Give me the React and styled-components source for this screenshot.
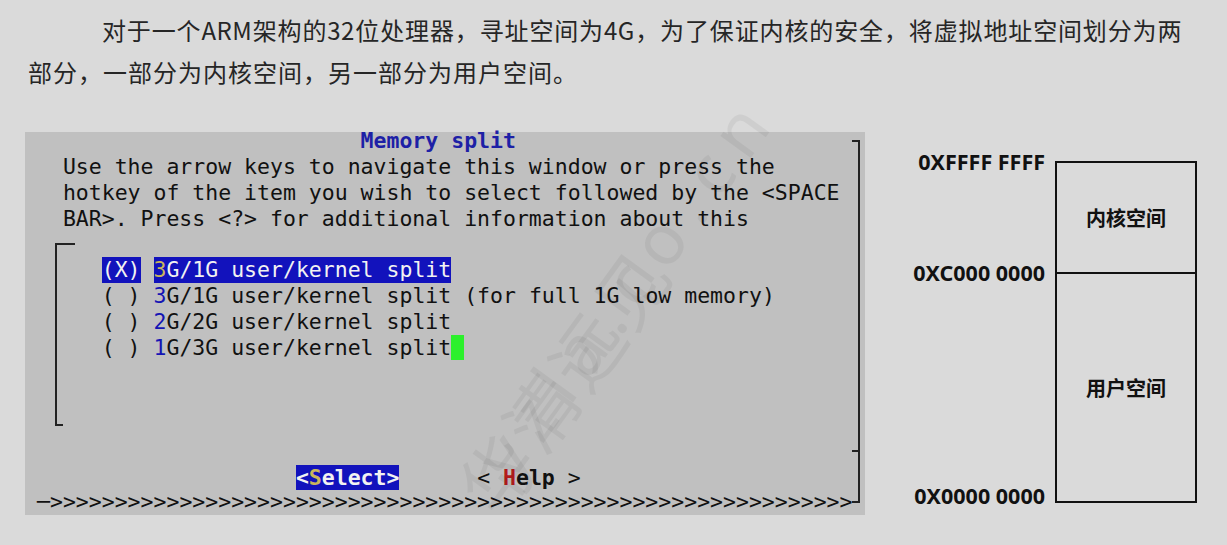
import React from 'react';
import styled, { createGlobalStyle } from 'styled-components';

const GlobalStyle = createGlobalStyle`
  html, body {
    margin: 0;
    padding: 0;
    background: #dadada;
  }
`;

const Page = styled.div`
  position: relative;
  height: 545px;
  padding-top: 9px;
  box-sizing: border-box;
  overflow: hidden;
`;

const Paragraph = styled.div`
  margin: 0 0 39px 28px;
  width: 1154px;
  font-family: "Noto Sans CJK SC", "Noto Sans", sans-serif;
  font-size: 24px;
  line-height: 42px;
  color: #262626;
`;

const ParaLine = styled.div`
  text-indent: ${p => (p.$first ? '74px' : '0')};
  text-align: ${p => (p.$justify ? 'justify' : 'left')};
  text-align-last: ${p => (p.$justify ? 'justify' : 'auto')};
  letter-spacing: ${p => (p.$justify ? '0.5px' : '1px')};
`;

const Content = styled.div`
  display: flex;
  align-items: flex-start;
`;

// terminal dialog (menuconfig)
const Terminal = styled.div`
  display: flex;
  width: 840px;
  height: 383px;
  box-sizing: border-box;
  margin-left: 25px;
  padding-left: 12px;
  background: #c0c0c0;
  font-family: "DejaVu Sans Mono", monospace;
  font-size: 21.5px;
  line-height: 25.8px;
  color: #111;
  white-space: pre;
`;

const Body = styled.div`
  width: 63ch;
  display: flex;
  flex-direction: column;
`;

const Title = styled.div`
  height: 18px;
  line-height: 18px;
  margin-bottom: 4px;
  padding-left: 25ch;
  color: #1d20a6;
  font-weight: bold;
`;

const Line = styled.div`
  height: 25.8px;
  padding-left: ${p => p.$indent || 0}ch;
`;

const ListBox = styled.div`
  position: relative;
  height: 180.6px;
  box-sizing: border-box;
  margin: 12.9px 0 12.9px calc(1.5ch - 1px);
  padding: 12.9px 0 0 calc(3.5ch - 1px);
  border-left: 2px solid #222;

  &::before {
    content: '';
    position: absolute;
    left: -2px;
    top: -1px;
    width: 20px;
    border-top: 2px solid #222;
  }
  &::after {
    content: '';
    position: absolute;
    left: -2px;
    bottom: -1px;
    width: 8px;
    border-top: 2px solid #222;
  }
`;

const Item = styled.div`
  height: 25.8px;
  display: flex;
`;

const Mark = styled.span`
  background: ${p => (p.$active ? '#1212bc' : 'transparent')};
  color: ${p => (p.$active ? '#f2f2f2' : '#111')};
`;

const Hot = styled.span`
  color: ${p => p.$color};
`;

const Cursor = styled.span`
  display: inline-block;
  width: 1ch;
  height: 25.8px;
  background: #2cf02c;
`;

const ButtonRow = styled.div`
  height: 25.8px;
  padding-left: 20ch;
  padding-top: 2px;
  box-sizing: border-box;
`;

const Button = styled.span`
  background: ${p => (p.$active ? '#1212bc' : 'transparent')};
  color: ${p => (p.$active ? '#f2f2f2' : '#111')};
`;

const ButtonLabel = styled.span`
  font-weight: bold;
`;

const Edge = styled.div`
  width: 1ch;
  display: flex;
  flex-direction: column;
  padding: 8px 0 12px;
  box-sizing: border-box;
`;

const EdgeLine = styled.div`
  flex: 1;
  width: calc(0.5ch + 1px);
  box-sizing: border-box;
  border: 2px solid #222;
  border-left: none;
  display: flex;
  flex-direction: column;
  justify-content: flex-end;
`;

const Tick = styled.div`
  width: 100%;
  margin-bottom: 49px;
  border-top: 2px solid #222;
`;

// memory map diagram
const Diagram = styled.div`
  display: flex;
  align-items: flex-start;
  gap: 10px;
  margin-left: 45px;
  font-family: "Noto Sans", "Noto Sans CJK SC", sans-serif;
  font-weight: 700;
  color: #111;
`;

const LabelCol = styled.div`
  width: 135px;
  margin-top: 18px;
  display: flex;
  flex-direction: column;
  align-items: flex-end;
`;

const Addr = styled.div`
  margin-top: ${p => p.$offset || 0}px;
  font-size: 21.5px;
  line-height: 24px;
  white-space: nowrap;
`;

const MemBox = styled.div`
  width: 142px;
  margin-top: 29px;
  border: 2px solid #111;
  box-sizing: border-box;
`;

const Region = styled.div`
  height: ${p => p.$height}px;
  display: flex;
  align-items: center;
  justify-content: center;
  border-bottom: ${p => (p.$divider ? '2px solid #111' : 'none')};
  font-family: "Noto Sans CJK SC", sans-serif;
  font-size: 20px;
`;

// faint watermark over the page
const Watermark = styled.div`
  position: absolute;
  inset: 0;
  pointer-events: none;
`;

const WaterText = styled.span`
  position: absolute;
  left: ${p => p.$x - p.$w / 2}px;
  top: ${p => p.$y - 40}px;
  width: ${p => p.$w}px;
  height: 80px;
  line-height: 80px;
  text-align: center;
  transform: rotate(-54deg);
  font-family: "Noto Sans", "Noto Sans CJK SC", sans-serif;
  font-size: ${p => p.$size}px;
  letter-spacing: ${p => p.$spacing}px;
  color: rgba(0, 0, 0, 0.05);
  white-space: nowrap;
`;

const items = [
  { hot: '3', rest: 'G/1G user/kernel split', active: true },
  { hot: '3', rest: 'G/1G user/kernel split (for full 1G low memory)' },
  { hot: '2', rest: 'G/2G user/kernel split' },
  { hot: '1', rest: 'G/3G user/kernel split', cursor: true },
];

function MemorySplitDialog() {
  return (
    <Terminal>
      <Body>
        <Title>Memory split</Title>
        <Line $indent={2}>Use the arrow keys to navigate this window or press the</Line>
        <Line $indent={2}>hotkey of the item you wish to select followed by the &lt;SPACE</Line>
        <Line $indent={2}>BAR&gt;. Press &lt;?&gt; for additional information about this</Line>
        <ListBox>
          {items.map((it, i) => (
            <Item key={i}>
              <Mark $active={it.active}>{it.active ? '(X)' : '( )'}</Mark>
              <span> </span>
              <Mark $active={it.active}>
                <Hot $color={it.active ? '#c9b65c' : '#1414b4'}>{it.hot}</Hot>
                {it.rest}
              </Mark>
              {it.cursor && <Cursor />}
            </Item>
          ))}
        </ListBox>
        <Line />
        <ButtonRow>
          <Button $active>
            <ButtonLabel>&lt;<Hot $color="#c9b65c">S</Hot>elect&gt;</ButtonLabel>
          </Button>
          {'      '}
          <Button>
            &lt; <ButtonLabel><Hot $color="#b41c1c">H</Hot>elp</ButtonLabel> &gt;
          </Button>
        </ButtonRow>
        <Line>{'─' + '>'.repeat(62)}</Line>
      </Body>
      <Edge>
        <EdgeLine>
          <Tick />
        </EdgeLine>
      </Edge>
    </Terminal>
  );
}

function MemoryMap() {
  return (
    <Diagram>
      <LabelCol>
        <Addr>0XFFFF FFFF</Addr>
        <Addr $offset={87}>0XC000 0000</Addr>
        <Addr $offset={199}>0X0000 0000</Addr>
      </LabelCol>
      <MemBox>
        <Region $height={109} $divider>内核空间</Region>
        <Region $height={227}>用户空间</Region>
      </MemBox>
    </Diagram>
  );
}

export default function App() {
  return (
    <Page>
      <GlobalStyle />
      <Paragraph>
        <ParaLine $first $justify>
          对于一个ARM架构的32位处理器，寻址空间为4G，为了保证内核的安全，将虚拟地址空间划分为两
        </ParaLine>
        <ParaLine>部分，一部分为内核空间，另一部分为用户空间。</ParaLine>
      </Paragraph>
      <Content>
        <MemorySplitDialog />
        <MemoryMap />
      </Content>
      <Watermark>
        <WaterText $x={625} $y={285} $w={600} $size={70} $spacing={14}>yzla.co.cn</WaterText>
        <WaterText $x={565} $y={380} $w={316} $size={72} $spacing={4}>华清远见</WaterText>
      </Watermark>
    </Page>
  );
}
